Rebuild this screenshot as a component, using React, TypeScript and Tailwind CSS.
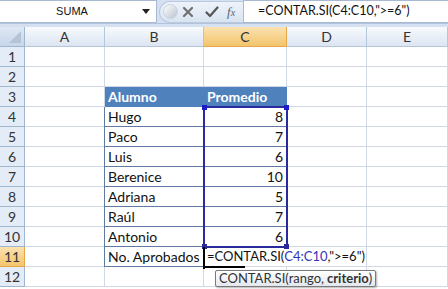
import React from "react";

const FONT = { fontFamily: "Lato, 'Liberation Sans', sans-serif" };

type Row = { n: number; b?: string; c?: string; kind?: "head" | "data" | "total" };

const rows: Row[] = [
  { n: 1 },
  { n: 2 },
  { n: 3, b: "Alumno", c: "Promedio", kind: "head" },
  { n: 4, b: "Hugo", c: "8", kind: "data" },
  { n: 5, b: "Paco", c: "7", kind: "data" },
  { n: 6, b: "Luis", c: "6", kind: "data" },
  { n: 7, b: "Berenice", c: "10", kind: "data" },
  { n: 8, b: "Adriana", c: "5", kind: "data" },
  { n: 9, b: "Raúl", c: "7", kind: "data" },
  { n: 10, b: "Antonio", c: "6", kind: "data" },
  { n: 11, b: "No. Aprobados", kind: "total" },
  { n: 12 },
];

const cols = ["A", "B", "C", "D", "E"];

export default function App() {
  return (
    <div className="w-[448px] h-[289px] overflow-hidden bg-white relative text-[#222]" style={FONT}>
      {/* Formula bar */}
      <div className="h-[24px] flex bg-[#d5e1f1] border-b border-[#b3c3da]">
        <div className="w-[157px] h-[23px] bg-white border border-[#a7b9d3] border-l-0 flex items-center">
          <span className="flex-1 text-center text-[11px] text-[#111] pl-[2px]" style={{ fontFamily: "'Liberation Sans', Arial, sans-serif" }}>
            SUMA
          </span>
          <svg width="8" height="5" viewBox="0 0 8 5" className="mr-[6px]">
            <path d="M0 0 L8 0 L4 5 Z" fill="#222" />
          </svg>
        </div>
        <div className="w-[86px] flex items-center">
          <div className="ml-[2px] h-[22px] w-[84px] rounded-l-full bg-gradient-to-b from-[#eef3fa] to-[#d9e4f2] border border-[#b9c9de] border-r-0 flex items-center">
            <div className="ml-[3px] w-[15px] h-[15px] rounded-full bg-gradient-to-br from-[#ffffff] to-[#b8c2cf] border border-[#c9d2de]" />
            <svg width="12" height="12" viewBox="0 0 12 12" className="ml-[4px]">
              <path d="M2 2 L10 10 M10 2 L2 10" stroke="#707070" strokeWidth="2.2" strokeLinecap="round" />
            </svg>
            <svg width="14" height="12" viewBox="0 0 14 12" className="ml-[11px]">
              <path d="M1.5 6.5 L5 10 L12.5 1.5" stroke="#555" strokeWidth="2.2" fill="none" strokeLinecap="round" strokeLinejoin="round" />
            </svg>
            <span className="ml-[8px] text-[13px] italic text-[#55657a]" style={{ fontFamily: "'Liberation Serif', serif" }}>
              f<span className="text-[10px]">x</span>
            </span>
          </div>
        </div>
        <div className="flex-1 h-[23px] bg-white border border-[#a7b9d3] border-r-0 flex items-center pl-[14px] text-[12.5px] text-[#111]">
          =CONTAR.SI(C4:C10,"&gt;=6")
        </div>
      </div>
      <div className="h-[3px] bg-[#d5e1f1]" />

      {/* Grid */}
      <div className="grid grid-cols-[25px_80px_99px_83px_80px_81px] auto-rows-[20px]">
        {/* corner */}
        <div className="bg-gradient-to-b from-[#dfe8f4] to-[#c7d6ea] border-r border-b border-[#9eb6ce] relative">
          <svg width="12" height="12" viewBox="0 0 12 12" className="absolute right-[3px] bottom-[3px]">
            <path d="M12 0 L12 12 L0 12 Z" fill="#b5c3d5" />
          </svg>
        </div>
        {cols.map((c) => (
          <div
            key={c}
            className={
              c === "C"
                ? "flex items-center justify-center text-[14px] text-[#333] border-r border-b border-[#e6a64a] bg-gradient-to-b from-[#fbe2b0] to-[#f3c46b]"
                : "flex items-center justify-center text-[14px] text-[#333] border-r border-b border-[#b4c6dc] bg-gradient-to-b from-[#f7fafd] to-[#dce5f1]"
            }
          >
            {c}
          </div>
        ))}

        {rows.map((r) => (
          <React.Fragment key={r.n}>
            <div
              className={
                r.n === 11
                  ? "flex items-center justify-center text-[14px] text-[#333] border-r border-b border-[#e6a64a] bg-gradient-to-b from-[#fbe2b0] to-[#f3c46b]"
                  : "flex items-center justify-center text-[14px] text-[#333] border-r border-b border-[#9eb6ce] bg-[#e4ecf7]"
              }
            >
              {r.n}
            </div>
            <div className="border-r border-b border-[#d0d7e5]" />
            {/* B */}
            {r.kind === "head" ? (
              <div className="bg-[#4f81bd] text-white font-bold text-[14px] flex items-center pl-[3px] border-b border-[#4f81bd]">
                {r.b}
              </div>
            ) : r.kind ? (
              <div className="border-l border-r border-b border-[#5f7aa3] -ml-px text-[14px] flex items-center pl-[3px] text-[#111]">
                {r.b}
              </div>
            ) : (
              <div className="border-r border-b border-[#d0d7e5]" />
            )}
            {/* C */}
            {r.kind === "head" ? (
              <div className="bg-[#4f81bd] text-white font-bold text-[14px] flex items-center pl-[3px] border-b border-[#4f81bd]">
                {r.c}
              </div>
            ) : r.kind === "data" ? (
              <div className="border-r border-b border-[#5f7aa3] text-[14px] flex items-center justify-end pr-[3px] text-[#111]">
                {r.c}
              </div>
            ) : r.kind === "total" ? (
              <div className="relative border-b border-[#d0d7e5]">
                <span className="absolute left-[3px] top-0 h-[20px] flex items-center whitespace-nowrap text-[13px] text-[#111] z-10">
                  =CONTAR.SI(<span className="text-[#3333b8]">C4:C10</span>,"&gt;=6")
                </span>
              </div>
            ) : (
              <div className="border-r border-b border-[#d0d7e5]" />
            )}
            <div className={r.kind === "total" ? "border-r border-b border-[#d0d7e5] bg-white" : "border-r border-b border-[#d0d7e5]"} />
            <div className="border-r border-b border-[#d0d7e5]" />
          </React.Fragment>
        ))}
      </div>

      {/* Range highlight C4:C10 */}
      <div className="absolute left-[203px] top-[106px] w-[85px] h-[142px] border-2 border-[#2a2a9c] pointer-events-none">
        <div className="absolute -left-[3px] -top-[3px] w-[5px] h-[5px] bg-[#1c1cc8]" />
        <div className="absolute -right-[3px] -top-[3px] w-[5px] h-[5px] bg-[#1c1cc8]" />
        <div className="absolute -left-[3px] -bottom-[3px] w-[5px] h-[5px] bg-[#2a2a9c]" />
        <div className="absolute -right-[3px] -bottom-[3px] w-[5px] h-[5px] bg-[#2a2a9c]" />
      </div>

      {/* Active cell edit border */}
      <div className="absolute left-[203px] top-[247px] w-[2px] h-[22px] bg-black" />
      <div className="absolute left-[203px] top-[266px] w-[42px] h-[2px] bg-black" />

      {/* Tooltip */}
      <div className="absolute left-[215px] top-[270px] h-[17px] px-[3px] flex items-center bg-gradient-to-b from-[#ffffff] to-[#e4e8ee] border border-[#7a7a7a] rounded-[2px] shadow-[1px_1px_2px_rgba(0,0,0,0.3)] text-[13px] text-[#333] whitespace-nowrap">
        CONTAR.SI(rango, <b className="ml-[3px]">criterio</b>)
      </div>
    </div>
  );
}
